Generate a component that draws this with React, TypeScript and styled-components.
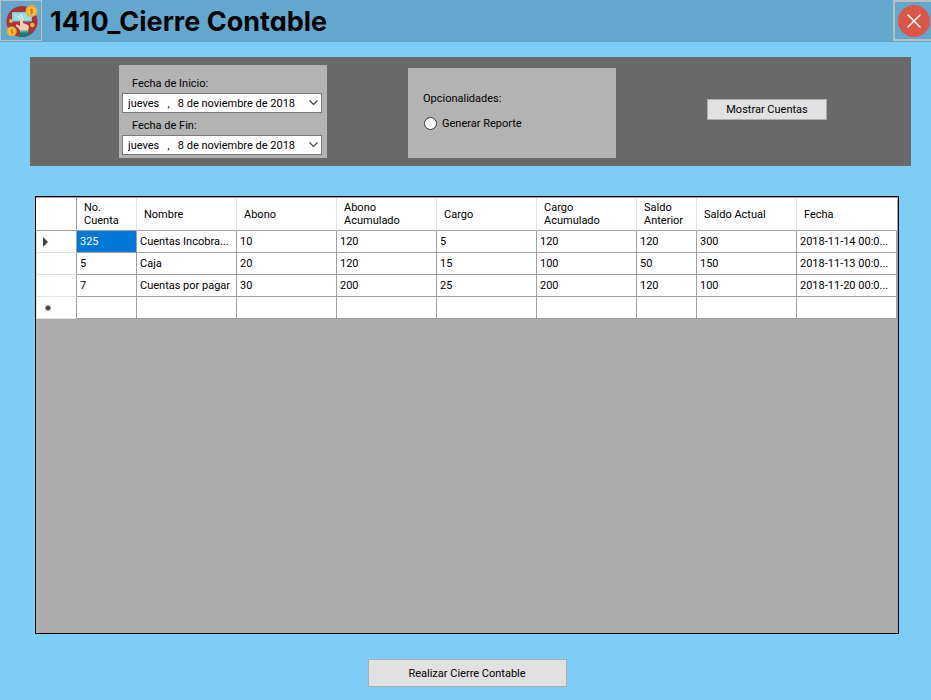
import React, { useState } from "react";
import styled, { createGlobalStyle } from "styled-components";

const GlobalStyle = createGlobalStyle`
  *, *::before, *::after { box-sizing: border-box; }
  body {
    margin: 0;
    background: #7ccef7;
    color: #000;
    font: 11px/13px Roboto, "Liberation Sans", sans-serif;
  }
  button, select, input { font: inherit; color: inherit; }
`;

const Window = styled.div`
  min-height: 100vh;
  display: flex;
  flex-direction: column;
`;

const TitleBar = styled.header`
  height: 42px;
  display: flex;
  align-items: stretch;
  background: #62a8ce;
`;

const IconButton = styled.button<{ $edge?: number }>`
  flex: none;
  width: ${(p) => (p.$edge ? 38 : 42)}px;
  height: 41px;
  padding: 0;
  overflow: hidden;
  display: flex;
  align-items: center;
  justify-content: center;
  background: transparent;
  border: ${(p) => p.$edge || 1}px solid #bdbdbd;
  border-right-width: ${(p) => (p.$edge ? 0 : 1)}px;
`;

const Title = styled.h1`
  flex: 1;
  margin: 0;
  padding-left: 8px;
  font: 700 27px/44px Inter, "Century Gothic", sans-serif;
  font-feature-settings: "cv11";
  white-space: nowrap;
`;

const FilterBar = styled.section`
  display: flex;
  align-items: flex-end;
  gap: 81px;
  height: 109px;
  margin: 15px 20px 0 30px;
  padding: 0 84px 8px 89px;
  background: #696969;
`;

const DateGroup = styled.div`
  width: 208px;
  height: 93px;
  padding: 12px 5px 0 3px;
  background: #b3b3b3;
`;

const FieldLabel = styled.label`
  display: block;
  height: 16px;
  padding-left: 10px;
`;

const Picker = styled.div`
  display: grid;
  height: 20px;
  margin-bottom: 6px;
  align-items: center;
  > * { grid-area: 1 / 1; }
  > svg { justify-self: end; margin-right: 4px; pointer-events: none; }
`;

const DateSelect = styled.select`
  appearance: none;
  width: 100%;
  height: 20px;
  padding: 0 20px 0 5px;
  background: #fff;
  border: 1px solid #7a7a7a;
  border-radius: 0;
`;

const OptionGroup = styled.fieldset`
  width: 208px;
  height: 90px;
  margin: 0;
  padding: 24px 15px 0;
  border: 0;
  background: #b3b3b3;
`;

const Legend = styled.legend`
  float: left;
  width: 100%;
  padding: 0;
  margin-bottom: 12px;
`;

const RadioLabel = styled.label`
  clear: both;
  display: flex;
  align-items: center;
  gap: 5px;
`;

const Radio = styled.input`
  appearance: none;
  width: 13px;
  height: 13px;
  margin: 0 0 0 1px;
  border: 1px solid #333;
  border-radius: 50%;
  background: #fff;
  &:checked { background: radial-gradient(#222 0 3px, #fff 4px); }
`;

const ActionButton = styled.button<{ $large?: boolean }>`
  width: ${(p) => (p.$large ? 199 : 120)}px;
  height: ${(p) => (p.$large ? 28 : 21)}px;
  padding: 0;
  background: #e1e1e1;
  border: 1px solid #adadad;
`;

const ShowButton = styled(ActionButton)`
  margin: 0 0 38px auto;
`;

const Content = styled.main`
  flex: 1;
  display: flex;
  flex-direction: column;
  align-items: center;
  gap: 25px;
  padding: 30px 32px 13px 35px;
`;

const GridPane = styled.div`
  flex: 1;
  align-self: stretch;
  padding-right: 1px;
  background: #ababab;
  border: 1px solid #000;
`;

const Table = styled.table`
  width: 100%;
  table-layout: fixed;
  border-collapse: separate;
  border-spacing: 0;
  border-top: 1px solid #a0a0a0;
  background: #fff;
`;

const HeadCell = styled.th`
  height: 33px;
  padding: 0 7px;
  text-align: left;
  font-weight: 400;
  border-right: 1px solid #e2e2e2;
  border-bottom: 1px solid #a0a0a0;
  &:first-child { border-right-color: #a0a0a0; }
  &:last-child { border-right-color: #fff; }
`;

const RowHead = styled.th`
  height: 22px;
  padding: 0 0 0 6px;
  text-align: left;
  border-right: 1px solid #a0a0a0;
  border-bottom: 1px solid #e2e2e2;
  border-left: 1px solid #e2e2e2;
  svg { display: block; }
`;

const Cell = styled.td<{ $selected?: boolean }>`
  height: 22px;
  padding: 0 3px;
  white-space: nowrap;
  border-right: 1px solid #a0a0a0;
  border-bottom: 1px solid #a0a0a0;
  background: ${(p) => (p.$selected ? "#0078d7" : "#fff")};
  color: ${(p) => (p.$selected ? "#fff" : "#000")};
`;

const columns = [
  { name: "No. Cuenta", width: 60 },
  { name: "Nombre", width: 100 },
  { name: "Abono", width: 100 },
  { name: "Abono Acumulado", width: 100 },
  { name: "Cargo", width: 100 },
  { name: "Cargo Acumulado", width: 100 },
  { name: "Saldo Anterior", width: 60 },
  { name: "Saldo Actual", width: 100 },
  { name: "Fecha", width: 100 },
];

const rows = [
  ["325", "Cuentas Incobra...", "10", "120", "5", "120", "120", "300", "2018-11-14 00:0..."],
  ["5", "Caja", "20", "120", "15", "100", "50", "150", "2018-11-13 00:0..."],
  ["7", "Cuentas por pagar", "30", "200", "25", "200", "120", "100", "2018-11-20 00:0..."],
  ["", "", "", "", "", "", "", "", ""],
];

const Col = styled.col<{ $width: number }>`
  width: ${(p) => p.$width}px;
`;

function PaymentIcon() {
  return (
    <svg width="34" height="34" viewBox="4 4 34 34" aria-hidden="true">
      <circle cx="22" cy="21.5" r="15.5" fill="#a83236" />
      <path d="M12 12h20v9.500H12z" fill="#7fcbd9" />
      <path d="M13.500 13.500h17v6.500h-17z" fill="#9adde6" />
      <path d="M20 15h2m-4 2h2m1 0h2m-4 2h5" stroke="#eefafb" />
      <path d="M20 31l-1-2-3-3c-1-1.500 1-2 2-1l2 1v-7c0-2 3-2 3 0v4l5 2c1.200 1 1 3 0 6z" fill="#f4cdb2" />
      <path d="M20 31h9v4l-4 2h-5z" fill="#167a70" />
      <path d="M20 30.500h8v2h-8z" fill="#40b2a1" />
      <circle cx="11" cy="21" r="2" fill="#f3b531" />
      <circle cx="32.300" cy="25" r="2.300" fill="#f3b531" />
      <circle cx="31.500" cy="11" r="6" fill="#f2ae2e" />
      <circle cx="31.500" cy="11" r="4" fill="#f9c43b" />
      <circle cx="11.700" cy="31.500" r="5" fill="#f2ae2e" />
      <circle cx="11.700" cy="31.500" r="3.300" fill="#f9c43b" />
      <path d="M33 9.500h-2.500v1.500h2v2H30m1.500-4.500v6M13 30h-2v1.500h2V33h-2m1-4v5" fill="none" stroke="#c97c20" />
    </svg>
  );
}

function CloseIcon() {
  return (
    <svg width="36" height="37" viewBox="0 0 36 37" aria-hidden="true">
      <circle cx="19" cy="19" r="16" fill="#dc5648" />
      <path d="M13 13l12 12M25 13L13 25" stroke="#fff" strokeWidth="1.500" strokeLinecap="round" />
    </svg>
  );
}

function DateField({ id, label }: { id: string; label: string }) {
  return (
    <>
      <FieldLabel htmlFor={id}>{label}</FieldLabel>
      <Picker>
        <DateSelect id={id}>
          <option>{"jueves\u00a0\u00a0 ,\u00a0\u00a0 8 de noviembre de 2018"}</option>
        </DateSelect>
        <svg width="9" height="6" viewBox="0 0 9 6" aria-hidden="true">
          <path d="M0.500 0.500l4 4 4-4" fill="none" stroke="#444" strokeWidth="1.200" />
        </svg>
      </Picker>
    </>
  );
}

function RowMarker({ index }: { index: number }) {
  if (index === 0) {
    return (
      <svg width="6" height="10" viewBox="0 0 6 10" aria-label="Fila actual">
        <path d="M0 0l5 5-5 5z" fill="#404040" />
      </svg>
    );
  }
  if (index === rows.length - 1) {
    return (
      <svg width="10" height="6" viewBox="0 0 10 6" aria-label="Fila nueva">
        <circle cx="5" cy="3" r="2" fill="#404040" />
        <path d="M5 0v6M2.500 1l5 4M7.500 1l-5 4M2 3h6" stroke="#404040" />
      </svg>
    );
  }
  return null;
}

export default function App() {
  const [report, setReport] = useState(false);
  return (
    <Window>
      <GlobalStyle />
      <TitleBar>
        <IconButton type="button" aria-label="Menú">
          <PaymentIcon />
        </IconButton>
        <Title>1410_Cierre Contable</Title>
        <IconButton type="button" aria-label="Cerrar" $edge={2}>
          <CloseIcon />
        </IconButton>
      </TitleBar>
      <FilterBar>
        <DateGroup>
          <DateField id="inicio" label="Fecha de Inicio:" />
          <DateField id="fin" label="Fecha de Fin:" />
        </DateGroup>
        <OptionGroup>
          <Legend>Opcionalidades:</Legend>
          <RadioLabel>
            <Radio type="radio" name="opcion" checked={report} onChange={() => setReport(true)} />
            Generar Reporte
          </RadioLabel>
        </OptionGroup>
        <ShowButton type="button">Mostrar Cuentas</ShowButton>
      </FilterBar>
      <Content>
        <GridPane>
          <Table>
            <colgroup>
              <Col $width={41} />
              {columns.map((c) => (
                <Col key={c.name} $width={c.width} />
              ))}
            </colgroup>
            <thead>
              <tr>
                <HeadCell as="td" />
                {columns.map((c) => (
                  <HeadCell key={c.name} scope="col">{c.name}</HeadCell>
                ))}
              </tr>
            </thead>
            <tbody>
              {rows.map((row, r) => (
                <tr key={r}>
                  <RowHead scope="row"><RowMarker index={r} /></RowHead>
                  {row.map((value, c) => (
                    <Cell key={c} $selected={r === 0 && c === 0}>{value}</Cell>
                  ))}
                </tr>
              ))}
            </tbody>
          </Table>
        </GridPane>
        <ActionButton type="button" $large>Realizar Cierre Contable</ActionButton>
      </Content>
    </Window>
  );
}
